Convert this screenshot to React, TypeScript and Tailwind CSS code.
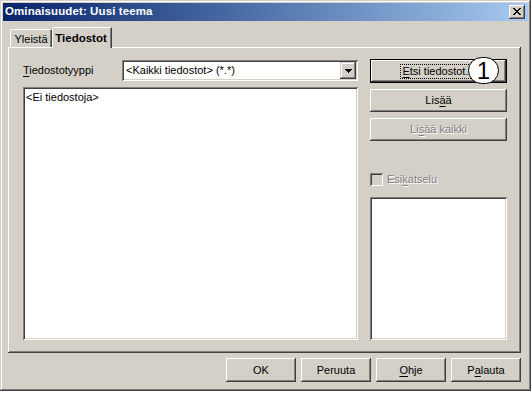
import React from 'react';

// Classic Win 2000 style dialog: "Ominaisuudet: Uusi teema"

const U = ({ children }: { children: React.ReactNode }) => (
  <span className="underline underline-offset-[2px] decoration-[1px]">{children}</span>
);

interface BtnProps {
  children: React.ReactNode;
  className?: string;
  disabled?: boolean;
  isDefault?: boolean;
}

const Btn: React.FC<BtnProps> = ({ children, className = '', disabled = false, isDefault = false }) => {
  if (isDefault) {
    return (
      <div className={`border border-black bg-[#d4d0c8] flex items-center justify-center ${className}`}>
        <div className="w-full h-full flex items-center justify-center shadow-[inset_-1px_-1px_#404040,inset_1px_1px_#ffffff,inset_-2px_-2px_#808080,inset_2px_2px_#d4d0c8]">
          <span className="outline outline-1 outline-dotted outline-black px-[1px] py-[1px]">{children}</span>
        </div>
      </div>
    );
  }
  return (
    <div
      className={`bg-[#d4d0c8] flex items-center justify-center shadow-[inset_-1px_-1px_#404040,inset_1px_1px_#ffffff,inset_-2px_-2px_#808080,inset_2px_2px_#d4d0c8] ${
        disabled ? 'text-[#808080] [text-shadow:1px_1px_0_#ffffff]' : 'text-black'
      } ${className}`}
    >
      {children}
    </div>
  );
};

export default function App() {
  return (
    <div className="w-[532px] h-[393px] bg-white">
      <div className="w-[531px] h-[391px] bg-[#d4d0c8] p-[3px] flex flex-col relative shadow-[inset_-1px_-1px_#404040,inset_1px_1px_#d4d0c8,inset_-2px_-2px_#808080,inset_2px_2px_#ffffff] font-['Liberation_Sans',Arial,sans-serif] text-[11px] text-black leading-none select-none">
        {/* title bar */}
        <div className="h-[18px] flex items-center bg-gradient-to-r from-[#0a246a] to-[#a6caf0] pl-[2px] pr-[3px]">
          <span className="text-white font-bold text-[11.5px] tracking-[0.1px]">Ominaisuudet: Uusi teema</span>
          <div className="ml-auto w-[16px] h-[14px] bg-[#d4d0c8] flex items-center justify-center shadow-[inset_-1px_-1px_#404040,inset_1px_1px_#ffffff,inset_-2px_-2px_#808080,inset_2px_2px_#d4d0c8]">
            <svg width="8" height="7" viewBox="0 0 8 7" shapeRendering="crispEdges" className="mt-[-1px] ml-[-1px]">
              <path
                fill="#000"
                d="M0 0h2v1H0z M6 0h2v1H6z M1 1h2v1H1z M5 1h2v1H5z M2 2h4v1H2z M3 3h2v1H3z M2 4h4v1H2z M1 5h2v1H1z M5 5h2v1H5z M0 6h2v1H0z M6 6h2v1H6z"
              />
            </svg>
          </div>
        </div>

        {/* tabs */}
        <div className="mt-[6px] h-[20px] flex items-end pl-[7px]">
          <div className="w-[42px] h-[18px] border-t border-l border-white border-r border-r-[#404040] shadow-[inset_-1px_0_#808080] flex items-center justify-center pt-[1px] rounded-tl-[2px]">
            Yleistä
          </div>
          <div className="relative z-10 w-[60px] h-[21px] mb-[-1px] bg-[#d4d0c8] border-t border-l border-white border-r border-r-[#404040] shadow-[inset_-1px_0_#808080] flex items-start justify-center pt-[5px] pr-[2px] rounded-tl-[2px]">
            <span className="font-bold text-[11.5px]">Tiedostot</span>
          </div>
        </div>

        {/* tab panel */}
        <div className="ml-[5px] w-[513px] h-[306px] flex pt-[13px] pl-[15px] pr-[14px] pb-[13px] shadow-[inset_-1px_-1px_#404040,inset_1px_1px_#ffffff,inset_-2px_-2px_#808080]">
          {/* left column */}
          <div className="w-[335px] flex flex-col">
            <div className="h-[21px] flex items-center">
              <span>
                <U>T</U>iedostotyyppi
              </span>
              <div className="ml-auto w-[236px] h-[21px] bg-white flex items-center pl-[4px] pr-[2px] shadow-[inset_1px_1px_#808080,inset_-1px_-1px_#ffffff,inset_2px_2px_#404040,inset_-2px_-2px_#d4d0c8]">
                <span>&lt;Kaikki tiedostot&gt; (*.*)</span>
                <div className="ml-auto w-[16px] h-[17px] bg-[#d4d0c8] flex items-center justify-center shadow-[inset_-1px_-1px_#404040,inset_1px_1px_#d4d0c8,inset_-2px_-2px_#808080,inset_2px_2px_#ffffff]">
                  <svg width="7" height="4" viewBox="0 0 7 4" shapeRendering="crispEdges">
                    <path fill="#000" d="M0 0h7v1H0z M1 1h5v1H1z M2 2h3v1H2z M3 3h1v1H3z" />
                  </svg>
                </div>
              </div>
            </div>
            <div className="mt-[6px] flex-1 bg-white pt-[5px] pl-[3px] shadow-[inset_1px_1px_#808080,inset_-1px_-1px_#ffffff,inset_2px_2px_#404040,inset_-2px_-2px_#d4d0c8]">
              &lt;Ei tiedostoja&gt;
            </div>
          </div>

          {/* right column */}
          <div className="ml-auto w-[137px] flex flex-col">
            <Btn isDefault className="h-[24px] -mt-[1px]">
              <U>E</U>tsi tiedostot...
            </Btn>
            <Btn className="h-[23px] mt-[6px]">
              Lis<U>ä</U>ä
            </Btn>
            <Btn disabled className="h-[23px] mt-[6px]">
              <span>
                Li<U>s</U>ää kaikki
              </span>
            </Btn>
            <div className="mt-[32px] h-[13px] flex items-center">
              <div className="w-[13px] h-[13px] bg-[#d4d0c8] shadow-[inset_1px_1px_#808080,inset_-1px_-1px_#ffffff,inset_2px_2px_#404040,inset_-2px_-2px_#d4d0c8]" />
              <span className="ml-[4px] text-[#808080] [text-shadow:1px_1px_0_#ffffff]">
                Esi<U>k</U>atselu
              </span>
            </div>
            <div className="mt-[11px] flex-1 bg-white shadow-[inset_1px_1px_#808080,inset_-1px_-1px_#ffffff,inset_2px_2px_#404040,inset_-2px_-2px_#d4d0c8]" />
          </div>
        </div>

        {/* bottom buttons */}
        <div className="mt-[5px] flex justify-end gap-[5px] pr-[7px]">
          <Btn className="w-[70px] h-[24px]">OK</Btn>
          <Btn className="w-[70px] h-[24px]">Peruuta</Btn>
          <Btn className="w-[70px] h-[24px]">
            <span>
              <U>O</U>hje
            </span>
          </Btn>
          <Btn className="w-[70px] h-[24px]">
            <span>
              P<U>a</U>lauta
            </span>
          </Btn>
        </div>

        {/* callout marker */}
        <div className="absolute left-[468px] top-[57px] w-[31px] h-[27px] rounded-full bg-white border-[1.5px] border-black flex items-center justify-center z-20">
          <span className="text-[24px] leading-none font-['Liberation_Sans',Arial,sans-serif] mt-[1px]">1</span>
        </div>
      </div>
    </div>
  );
}
